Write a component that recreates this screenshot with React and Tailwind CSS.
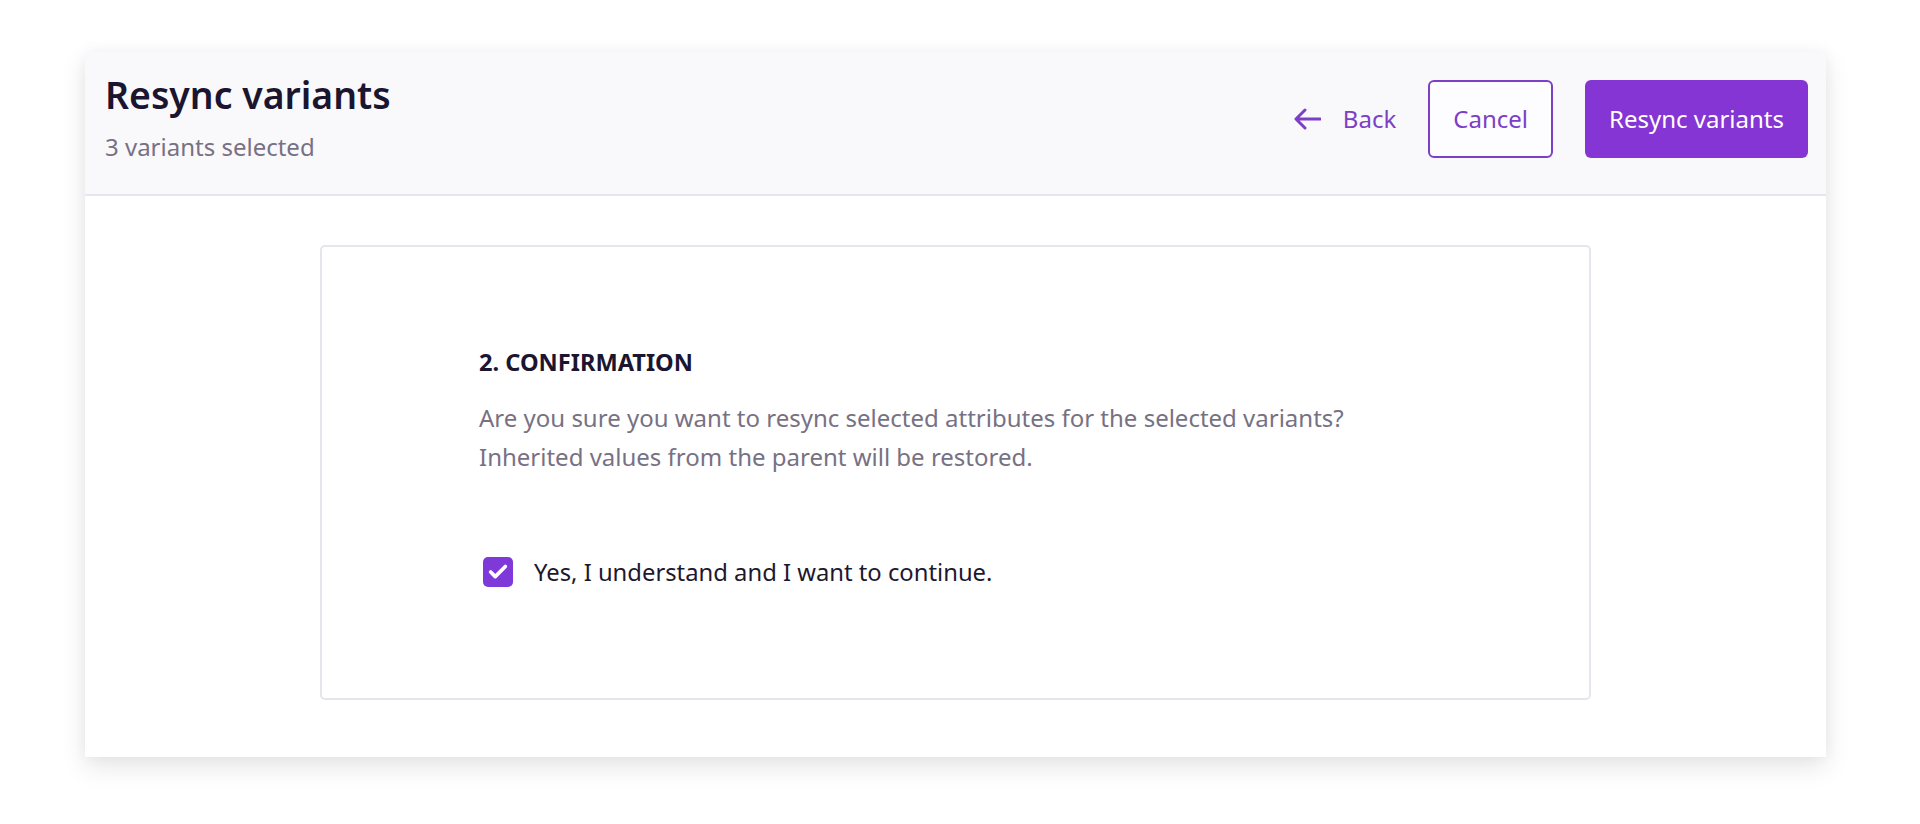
import { Check } from "lucide-react";

function BackArrow() {
  return (
    <svg width="28" height="22" viewBox="0 0 28 22" fill="none">
      <path
        d="M27 11H3M12 2L3 11L12 20"
        stroke="currentColor"
        strokeWidth="3"
        strokeLinecap="round"
        strokeLinejoin="round"
      />
    </svg>
  );
}

export default function App() {
  return (
    <div
      className="min-h-screen bg-white pt-[52px]"
      style={{ fontFamily: '"Noto Sans", "Open Sans", sans-serif' }}
    >
      <div className="ml-[85px] w-[1741px] bg-white shadow-[0_10px_24px_rgba(0,0,0,0.10),0_0_14px_rgba(0,0,0,0.04)]">

        {/* Header */}
        <div className="h-[144px] bg-[#f9f9fb] border-b-2 border-[#e7e5ee] flex justify-between items-start pt-[19px] pl-5 pr-[18px]">
          <div>
            <h1 className="text-[37.4px] leading-[48px] font-semibold text-[#1b1530]">
              Resync variants
            </h1>
            <p className="mt-3 text-[24px] leading-[32px] text-[#777184]">
              3 variants selected
            </p>
          </div>

          <div className="mt-[9px] flex items-center gap-8">
            <button className="flex items-center gap-[22px] text-[24px] text-[#7c3fc6]">
              <BackArrow />
              <span>Back</span>
            </button>

            <button className="h-[78px] px-[23px] border-2 border-[#7c3fc6] rounded-md bg-[#fdfcff] text-[24px] text-[#7c3fc6]">
              Cancel
            </button>

            <button className="h-[78px] px-6 rounded-md bg-[#8435d4] text-[24px] text-white">
              Resync variants
            </button>
          </div>
        </div>

        {/* Body */}
        <div className="pt-[49px] pb-[57px]">
          <div className="mx-auto w-[1271px] h-[455px] border-2 border-[#e6e5eb] rounded-[5px] pl-[157px] pt-[97px]">
            <h2 className="text-[23.6px] leading-[36px] font-bold text-[#1b1530]">
              2. CONFIRMATION
            </h2>

            <p className="mt-[18px] text-[24px] leading-[39px] text-[#777184]">
              Are you sure you want to resync selected attributes for the selected variants?
              <br />
              Inherited values from the parent will be restored.
            </p>

            <label className="mt-[81px] flex items-center gap-[21px] ml-[4px]">
              <span className="w-[30px] h-[30px] rounded-[5px] bg-[#8039d9] flex items-center justify-center">
                <Check size={22} strokeWidth={4} className="text-white" />
              </span>
              <span className="text-[23.8px] leading-[30px] text-[#1d1830]">
                Yes, I understand and I want to continue.
              </span>
            </label>
          </div>
        </div>

      </div>
    </div>
  );
}
